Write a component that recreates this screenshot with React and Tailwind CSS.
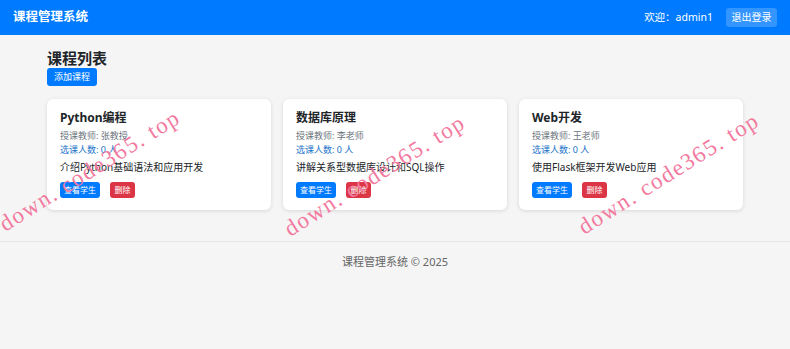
import React from 'react';

const courses = [
  { name: 'Python编程', teacher: '张教授', count: 0, desc: '介绍Python基础语法和应用开发' },
  { name: '数据库原理', teacher: '李老师', count: 0, desc: '讲解关系型数据库设计和SQL操作' },
  { name: 'Web开发', teacher: '王老师', count: 0, desc: '使用Flask框架开发Web应用' },
];

const marks = [
  { left: 90, top: 171 },
  { left: 375, top: 176 },
  { left: 669, top: 174 },
];

function CourseCard({ course }) {
  return (
    <div className="bg-white rounded-[6px] shadow-[0_1px_4px_rgba(0,0,0,0.12)] pl-[13px] pr-[13px] pt-[11px] pb-[12px]">
      <h3 className="text-[12px] leading-[16px] font-bold text-[#212529]">{course.name}</h3>
      <p className="mt-[3px] text-[9px] leading-[13px] text-[#6c757d]">授课教师: {course.teacher}</p>
      <p className="mt-[1px] text-[9px] leading-[13px] text-[#1a73c8]">选课人数: {course.count} 人</p>
      <p className="mt-[4px] text-[10px] leading-[15px] text-[#212529]">{course.desc}</p>
      <div className="mt-[7px] flex gap-[10px]">
        <button className="h-[16px] px-[4px] rounded-[3px] bg-[#007bff] text-white text-[8px] leading-[16px]">查看学生</button>
        <button className="h-[16px] px-[4.5px] rounded-[3px] bg-[#dc3545] text-white text-[8px] leading-[16px]">删除</button>
      </div>
    </div>
  );
}

export default function App() {
  return (
    <div
      className="relative min-h-[349px] bg-[#f5f5f5] overflow-hidden"
      style={{ fontFamily: '"Noto Sans", "Noto Sans CJK SC", sans-serif' }}
    >
      <header className="h-[35px] bg-[#007bff] flex items-center justify-between pl-[13px] pr-[13px]">
        <h1 className="text-[12.5px] font-bold text-white">课程管理系统</h1>
        <div className="flex items-center">
          <span className="text-[10.5px] text-white">欢迎：admin1</span>
          <button className="ml-[13px] h-[19px] px-[5.5px] rounded-[3px] bg-white/20 text-white text-[10px] leading-[19px]">退出登录</button>
        </div>
      </header>

      <main className="pt-[14px] pb-[31px] px-[47px]">
        <h2 className="text-[15px] leading-[18px] font-bold text-[#212529]">课程列表</h2>
        <div className="mt-[1px] flex">
          <button className="block h-[18px] px-[7px] rounded-[3px] bg-[#007bff] text-white text-[9px] leading-[18px]">添加课程</button>
        </div>
        <div className="mt-[13px] grid grid-cols-3 gap-[12px]">
          {courses.map((c) => (
            <CourseCard key={c.name} course={c} />
          ))}
        </div>
      </main>

      <footer className="border-t border-[#e6e6e6] pt-[13px] text-center">
        <p className="text-[11px] leading-[14px] text-[#666]">课程管理系统 © 2025</p>
      </footer>

      {marks.map((m, i) => (
        <div
          key={i}
          className="absolute pointer-events-none whitespace-nowrap text-[23px] tracking-[1.5px] text-[#f27a9f] -translate-x-1/2 -translate-y-1/2 -rotate-[32deg]"
          style={{ left: m.left, top: m.top, fontFamily: '"Liberation Serif", serif' }}
        >
          down. code365. top
        </div>
      ))}
    </div>
  );
}
